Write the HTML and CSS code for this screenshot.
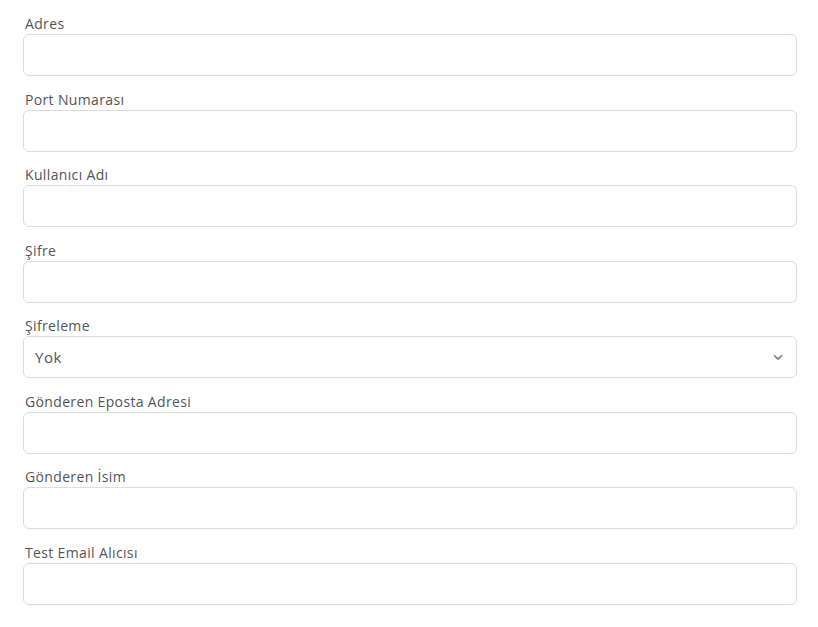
FILE: index.html
```html
<!DOCTYPE html>
<html lang="tr">
<head>
<meta charset="utf-8">
<link rel="stylesheet" href="styles.css">
</head>
<body>
<form class="form">
  <div class="group"><label class="label">Adres</label><input class="field" type="text"></div>
  <div class="group"><label class="label">Port Numarası</label><input class="field" type="text"></div>
  <div class="group"><label class="label">Kullanıcı Adı</label><input class="field" type="text"></div>
  <div class="group"><label class="label">Şifre</label><input class="field" type="password"></div>
  <div class="group"><label class="label">Şifreleme</label>
    <div class="select">
      <span class="select-value">Yok</span>
      <svg class="chevron" width="10" height="7" viewBox="0 0 10 7"><path d="M1.5 1.8 L5 5 L8.5 1.8" fill="none" stroke="#8a8a8a" stroke-width="1.8" stroke-linecap="round" stroke-linejoin="round"/></svg>
    </div>
  </div>
  <div class="group"><label class="label">Gönderen Eposta Adresi</label><input class="field" type="text"></div>
  <div class="group"><label class="label">Gönderen İsim</label><input class="field" type="text"></div>
  <div class="group"><label class="label">Test Email Alıcısı</label><input class="field" type="text"></div>
</form>
</body>
</html>
```
FILE: styles.css
```css
html, body {
  margin: 0;
  padding: 0;
  background: #ffffff;
}
body {
  font-family: "Open Sans", "DejaVu Sans", sans-serif;
  color: #555555;
}
.form {
  display: flex;
  flex-direction: column;
  gap: 12.5px;
  padding: 13px 21px 0 23px;
}
.group {
  display: flex;
  flex-direction: column;
}
.label {
  display: block;
  font-size: 14px;
  line-height: 21px;
  height: 21px;
  padding-left: 2px;
  letter-spacing: 0.35px;
  color: #555555;
}
.field, .select {
  box-sizing: border-box;
  height: 42px;
  width: 774px;
  border: 1px solid #dcdcdc;
  border-radius: 6px;
  background: #fff;
  margin: 0;
  font-family: inherit;
  font-size: 14px;
  outline: none;
}
.select {
  display: flex;
  align-items: center;
  justify-content: space-between;
  padding: 0 13px 0 11px;
}
.select-value {
  font-size: 15px;
  letter-spacing: 0.5px;
  color: #555555;
}
.chevron {
  display: block;
}
```
